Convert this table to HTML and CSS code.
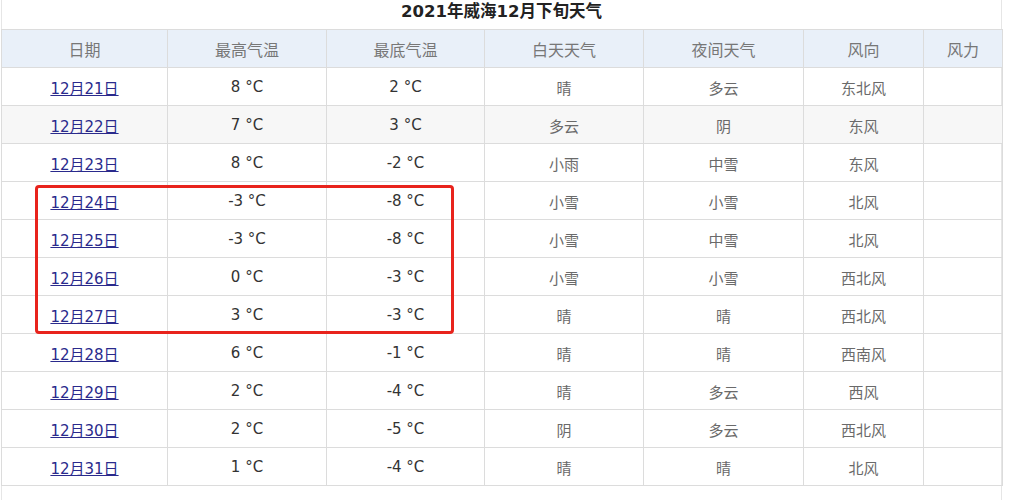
FILE: index.html
```html
<!DOCTYPE html>
<html lang="zh-CN">
<head>
<meta charset="utf-8">
<title>2021年威海12月下旬天气</title>
<link rel="stylesheet" href="styles.css">
</head>
<body>
<div class="wrap">
  <div class="caption">2021年威海12月下旬天气</div>
  <table class="weather">
    <colgroup>
      <col class="c1"><col class="c2"><col class="c3"><col class="c4"><col class="c5"><col class="c6"><col class="c7">
    </colgroup>
    <thead>
      <tr><th>日期</th><th>最高气温</th><th>最底气温</th><th>白天天气</th><th>夜间天气</th><th>风向</th><th>风力</th></tr>
    </thead>
    <tbody>
      <tr><td><a href="#">12月21日</a></td><td class="num">8 °C</td><td class="num">2 °C</td><td>晴</td><td>多云</td><td>东北风</td><td></td></tr>
      <tr class="alt"><td><a href="#">12月22日</a></td><td class="num">7 °C</td><td class="num">3 °C</td><td>多云</td><td>阴</td><td>东风</td><td></td></tr>
      <tr><td><a href="#">12月23日</a></td><td class="num">8 °C</td><td class="num">-2 °C</td><td>小雨</td><td>中雪</td><td>东风</td><td></td></tr>
      <tr><td><a href="#">12月24日</a></td><td class="num">-3 °C</td><td class="num">-8 °C</td><td>小雪</td><td>小雪</td><td>北风</td><td></td></tr>
      <tr><td><a href="#">12月25日</a></td><td class="num">-3 °C</td><td class="num">-8 °C</td><td>小雪</td><td>中雪</td><td>北风</td><td></td></tr>
      <tr><td><a href="#">12月26日</a></td><td class="num">0 °C</td><td class="num">-3 °C</td><td>小雪</td><td>小雪</td><td>西北风</td><td></td></tr>
      <tr><td><a href="#">12月27日</a></td><td class="num">3 °C</td><td class="num">-3 °C</td><td>晴</td><td>晴</td><td>西北风</td><td></td></tr>
      <tr><td><a href="#">12月28日</a></td><td class="num">6 °C</td><td class="num">-1 °C</td><td>晴</td><td>晴</td><td>西南风</td><td></td></tr>
      <tr><td><a href="#">12月29日</a></td><td class="num">2 °C</td><td class="num">-4 °C</td><td>晴</td><td>多云</td><td>西风</td><td></td></tr>
      <tr><td><a href="#">12月30日</a></td><td class="num">2 °C</td><td class="num">-5 °C</td><td>阴</td><td>多云</td><td>西北风</td><td></td></tr>
      <tr><td><a href="#">12月31日</a></td><td class="num">1 °C</td><td class="num">-4 °C</td><td>晴</td><td>晴</td><td>北风</td><td></td></tr>
    </tbody>
  </table>
  <div class="highlight"></div>
</div>
</body>
</html>
```

FILE: styles.css
```css
html, body {
  margin: 0;
  padding: 0;
  background: #fff;
}
body {
  font-family: "DejaVu Sans", "Noto Sans CJK SC", sans-serif;
  color: #333;
}
.wrap {
  position: relative;
  width: 1001px;
  height: 500px;
  margin-left: 1px;
  border-left: 1px solid #e6e6e6;
  border-right: 1px solid #e6e6e6;
  box-sizing: border-box;
}
.caption {
  height: 29px;
  line-height: 24px;
  text-align: center;
  font-weight: bold;
  font-size: 16.5px;
  color: #222;
}
.weather {
  border-collapse: collapse;
  table-layout: fixed;
  width: 1001px;
  margin-left: -1px;
}
.c1 { width: 166px; }
.c2 { width: 159px; }
.c3 { width: 158px; }
.c4 { width: 159px; }
.c5 { width: 160px; }
.c6 { width: 120px; }
.c7 { width: 79px; }
.weather th,
.weather td {
  height: 36px;
  padding: 1px 0 0;
  border: 1px solid #dcdcdc;
  text-align: center;
  font-size: 15px;
  font-weight: normal;
  color: #6a6a6a;
  font-family: "Noto Sans CJK SC", sans-serif;
}
.weather th {
  height: 37px;
  padding: 0;
  background: #e9f0f9;
  color: #777;
  font-size: 16px;
}
.weather td.num {
  color: #333;
  font-family: "DejaVu Sans", "Noto Sans CJK SC", sans-serif;
}
.weather td:first-child {
  font-family: "DejaVu Sans", "Noto Sans CJK SC", sans-serif;
}
.weather tr.alt td {
  background: #f7f7f7;
}
.weather a {
  color: #2a2a8c;
  text-decoration: underline;
}
.highlight {
  position: absolute;
  left: 33px;
  top: 185px;
  width: 419px;
  height: 149px;
  border: 3px solid #e8231c;
  border-radius: 4px;
  box-sizing: border-box;
}
```
